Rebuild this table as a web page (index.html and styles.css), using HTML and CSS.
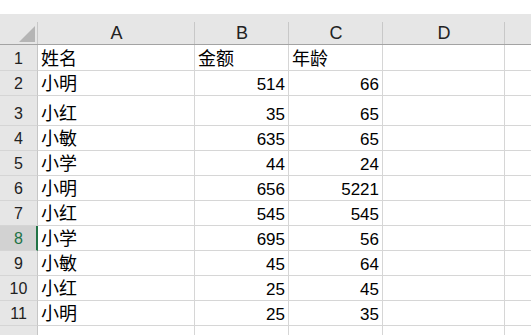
FILE: index.html
```html
<!DOCTYPE html>
<html lang="zh-CN">
<head>
<meta charset="utf-8">
<title>Sheet</title>
<link rel="stylesheet" href="styles.css">
</head>
<body>
<div class="page">
  <div class="sheet">
    <div class="hd corner"><svg class="tri" width="16" height="16" viewBox="0 0 16 16"><polygon points="16,0 16,16 0,16" fill="#b5b5b5"/></svg></div>
    <div class="hd col">A</div>
    <div class="hd col">B</div>
    <div class="hd col">C</div>
    <div class="hd col">D</div>
    <div class="hd col last"></div>

    <div class="rh">1</div><div class="c t">姓名</div><div class="c t">金额</div><div class="c t">年龄</div><div class="c"></div><div class="c e"></div>
    <div class="rh">2</div><div class="c t">小明</div><div class="c n">514</div><div class="c n">66</div><div class="c"></div><div class="c e"></div>
    <div class="rh">3</div><div class="c t">小红</div><div class="c n">35</div><div class="c n">65</div><div class="c"></div><div class="c e"></div>
    <div class="rh">4</div><div class="c t">小敏</div><div class="c n">635</div><div class="c n">65</div><div class="c"></div><div class="c e"></div>
    <div class="rh">5</div><div class="c t">小学</div><div class="c n">44</div><div class="c n">24</div><div class="c"></div><div class="c e"></div>
    <div class="rh">6</div><div class="c t">小明</div><div class="c n">656</div><div class="c n">5221</div><div class="c"></div><div class="c e"></div>
    <div class="rh">7</div><div class="c t">小红</div><div class="c n">545</div><div class="c n">545</div><div class="c"></div><div class="c e"></div>
    <div class="rh sel">8</div><div class="c t">小学</div><div class="c n">695</div><div class="c n">56</div><div class="c"></div><div class="c e"></div>
    <div class="rh">9</div><div class="c t">小敏</div><div class="c n">45</div><div class="c n">64</div><div class="c"></div><div class="c e"></div>
    <div class="rh">10</div><div class="c t">小红</div><div class="c n">25</div><div class="c n">45</div><div class="c"></div><div class="c e"></div>
    <div class="rh">11</div><div class="c t">小明</div><div class="c n">25</div><div class="c n">35</div><div class="c"></div><div class="c e"></div>
    <div class="rh"></div><div class="c"></div><div class="c"></div><div class="c"></div><div class="c"></div><div class="c e"></div>
  </div>
</div>
</body>
</html>
```

FILE: styles.css
```css
html, body {
  margin: 0;
  padding: 0;
  background: #ffffff;
}

.page {
  width: 531px;
  height: 335px;
  padding-top: 14px;
  box-sizing: border-box;
  overflow: hidden;
}

.sheet {
  display: grid;
  grid-template-columns: 38px 157px 94px 94px 122px 1fr;
  grid-template-rows: 31px 26px 25px 30px repeat(8, 25px) 20px;
  font-family: "Liberation Sans", "Noto Sans CJK SC", sans-serif;
  color: #000;
}

.hd {
  box-sizing: border-box;
  background:
    linear-gradient(#c8c8c8, #c8c8c8) right bottom / 1px 22px no-repeat,
    #e6e6e6;
  border-bottom: 1px solid #a3a3a3;
}

.hd.last {
  background: #e6e6e6;
}

.corner {
  display: flex;
  justify-content: flex-end;
  align-items: flex-end;
  padding: 0 3px 2px 0;
}

.tri {
  display: block;
}

.col {
  display: flex;
  justify-content: center;
  align-items: flex-end;
  font-size: 18px;
  line-height: 20px;
  padding-bottom: 1px;
  color: #222;
}

.rh {
  box-sizing: border-box;
  background: #e6e6e6;
  border-right: 1px solid #c6c6c6;
  border-bottom: 1px solid #d5d5d5;
  display: flex;
  justify-content: center;
  align-items: flex-end;
  font-size: 16px;
  line-height: 18px;
  padding-bottom: 2px;
  color: #222;
}

.rh.sel {
  background: #d2d2d2;
  color: #217346;
  border-right: 2px solid #217346;
  padding-left: 1px;
}

.c {
  box-sizing: border-box;
  border-right: 1px solid #d6d6d6;
  border-bottom: 1px solid #d6d6d6;
  display: flex;
  align-items: flex-end;
  font-size: 17px;
  line-height: 21px;
  padding: 0 3px 0 2px;
  white-space: nowrap;
  overflow: hidden;
}

.c.t {
  font-size: 18px;
  line-height: 22px;
  padding-left: 3px;
}

.c.n {
  justify-content: flex-end;
}

.c.e {
  border-right: none;
}
```
